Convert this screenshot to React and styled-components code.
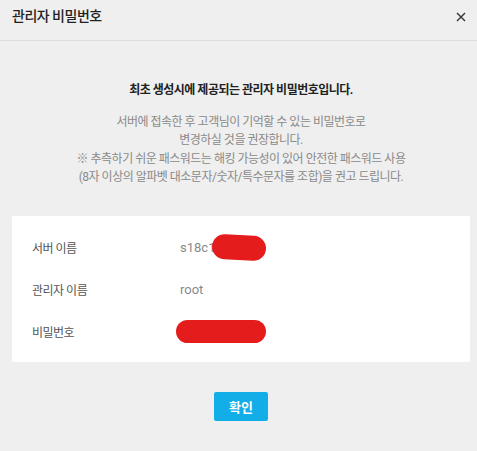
import React from "react";
import styled, { createGlobalStyle } from "styled-components";

const GlobalStyle = createGlobalStyle`
	html, body {
		margin: 0;
		padding: 0;
		background: #efefef;
	}
	body {
		font-family: Roboto, "Noto Sans CJK KR", "Noto Sans", sans-serif;
		letter-spacing: -0.5px;
	}
`;

const Modal = styled.div`
	width: 477px;
	height: 451px;
	background: #efefef;
	overflow: hidden;
`;

const Header = styled.div`
	height: 41px;
	box-sizing: border-box;
	border-bottom: 1px solid #dcdcdc;
	display: flex;
	align-items: center;
	justify-content: space-between;
	padding: 0 8px 0 12px;
`;

const Title = styled.h1`
	margin: 0;
	font-size: 14px;
	font-weight: 500;
	color: #222;
	line-height: 1;
	margin-top: -8px;
`;

const Close = styled.button`
	border: 0;
	background: none;
	padding: 0;
	width: 16px;
	height: 16px;
	display: flex;
	align-items: center;
	justify-content: center;
	margin-top: -6px;
	cursor: pointer;
`;

const Body = styled.div`
	padding: 0 7px 0 12px;
	display: flex;
	flex-direction: column;
	align-items: stretch;
`;

const Notice = styled.div`
	text-align: center;
	padding-top: 38px;
`;

const Lead = styled.p`
	margin: 0;
	font-size: 12px;
	font-weight: 700;
	color: #222;
	line-height: 22px;
`;

const Desc = styled.p`
	margin: 12px 0 0;
	font-size: 12px;
	color: #8a8a8a;
	line-height: 18.3px;
`;

const Card = styled.div`
	margin-top: 30px;
	background: #fff;
	border-radius: 2px;
	padding: 10px 20px;
`;

const Row = styled.div`
	display: flex;
	align-items: center;
	height: 42px;
	font-size: 12px;
`;

const Label = styled.span`
	width: 148px;
	color: #555;
`;

const Value = styled.span`
	color: #8a8a8a;
	font-size: 13px;
	letter-spacing: 0;
	display: flex;
	align-items: center;
`;

const Redact = styled.span`
	display: inline-block;
	background: #e51c1c;
	width: ${p => p.w}px;
	height: ${p => p.h}px;
	border-radius: ${p => p.h / 2}px;
	margin-left: ${p => p.ml || 0}px;
	transform: rotate(${p => p.rot || 0}deg);
`;

const Footer = styled.div`
	display: flex;
	justify-content: center;
	margin-top: 30px;
`;

const Confirm = styled.button`
	width: 54px;
	height: 29px;
	border: 0;
	border-radius: 2px;
	background: #13aee8;
	color: #fff;
	font-family: inherit;
	font-size: 13px;
	font-weight: 700;
	cursor: pointer;
`;

const rows = [
	{ label: "서버 이름", value: "s18c1", redact: { w: 54, h: 25, ml: -3, rot: 3 } },
	{ label: "관리자 이름", value: "root" },
	{ label: "비밀번호", value: "", redact: { w: 90, h: 23, ml: -4 } },
];

export default function App() {
	return (
		<>
			<GlobalStyle />
			<Modal>
				<Header>
					<Title>관리자 비밀번호</Title>
					<Close aria-label="닫기">
						<svg width="10" height="10" viewBox="0 0 10 10">
							<path d="M1 1L9 9M9 1L1 9" stroke="#333" strokeWidth="1.4" />
						</svg>
					</Close>
				</Header>
				<Body>
					<Notice>
						<Lead>최초 생성시에 제공되는 관리자 비밀번호입니다.</Lead>
						<Desc>
							서버에 접속한 후 고객님이 기억할 수 있는 비밀번호로<br />
							변경하실 것을 권장합니다.<br />
							※ 추측하기 쉬운 패스워드는 해킹 가능성이 있어 안전한 패스워드 사용<br />
							(8자 이상의 알파벳 대소문자/숫자/특수문자를 조합)을 권고 드립니다.
						</Desc>
					</Notice>
					<Card>
						{rows.map(r => (
							<Row key={r.label}>
								<Label>{r.label}</Label>
								<Value>
									{r.value}
									{r.redact && <Redact {...r.redact} />}
								</Value>
							</Row>
						))}
					</Card>
					<Footer>
						<Confirm>확인</Confirm>
					</Footer>
				</Body>
			</Modal>
		</>
	);
}
